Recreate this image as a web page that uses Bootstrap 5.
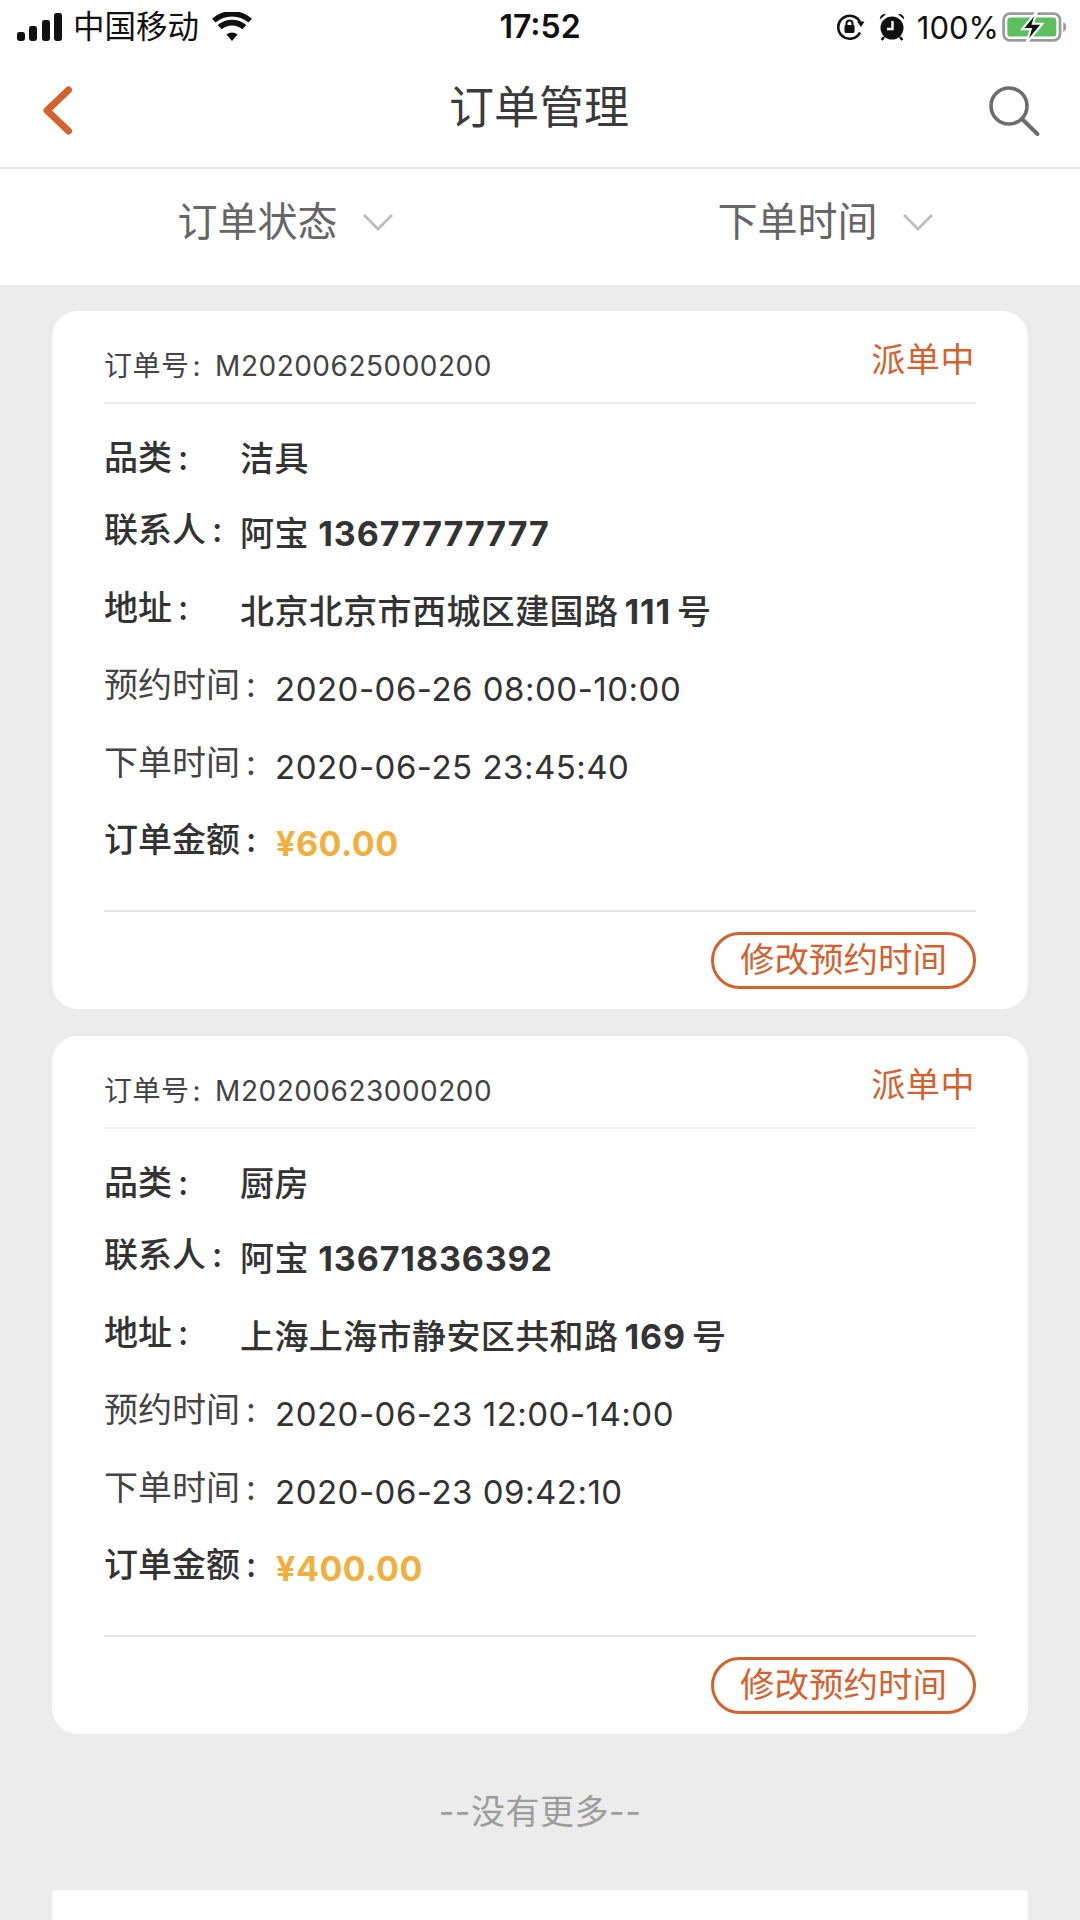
<!DOCTYPE html>
<html lang="zh-CN">
<head>
<meta charset="utf-8">
<title>订单管理</title>
<link rel="stylesheet" href="https://cdn.jsdelivr.net/npm/bootstrap@5.3.0/dist/css/bootstrap.min.css">
<style>
html,body{height:1920px;overflow:hidden}
body{background:#ececec;color:#333;font-family:Inter,"Noto Sans CJK SC",sans-serif}
.shell-top{background:#fff}
.statusbar{height:54px;padding:0 12px 0 17px;color:#111;position:relative}
.carrier{font-size:31.5px;line-height:1;margin-left:10px;margin-right:13px}
.clock{position:absolute;left:0;right:0;top:8px;text-align:center;font-size:32px;font-weight:600;line-height:38px}
.lockicon{margin-right:13px}
.pct{font-size:31px;line-height:1;margin-left:11px;margin-right:3px}
.navrow{height:115px;border-bottom:2px solid #e4e4e4;padding:0 38px 0 40px;position:relative}
.navtitle{position:absolute;left:0;right:2px;top:27px;text-align:center;font-size:45px;line-height:54px;color:#3a3a3a}
.filterrow{height:116px;padding-bottom:10px}
.filter-item{font-size:40px;color:#666;line-height:1;width:540px;gap:24px;padding-left:31px}
.sheet{width:976px;margin:0 0 0 52px;border:0;border-radius:26px;background:#fff;padding:0 52px;height:698px}
.orderhead{height:93px;border-bottom:2px solid #ebebeb;font-size:28px;color:#444;padding-top:26px}
.orderno{letter-spacing:.5px;line-height:38px;margin-top:10px}
.headcolon{margin:0 14px 0 3px}
.orderstate{color:#d4622f;font-size:34px;line-height:46px;letter-spacing:.6px;margin-right:1px}
.detail{padding-top:15px;height:508px;border-bottom:2px solid #e4e4e4;margin-bottom:20px}
.detail-row{height:77.4px;font-size:34px;line-height:46px;display:flex;padding-top:11px}
.detail-row:first-child .lab{margin-top:5px}
.detail-row:first-child .val{margin-top:6px}
.lab{font-weight:500;width:136px;flex:none;color:#333;white-space:nowrap}
.lab-wide{width:171px}
.lab-plain{font-weight:400;color:#444}
.colon{margin-left:6px}
.val{font-weight:500;color:#333;margin-top:4px;letter-spacing:.4px;white-space:nowrap}
.num{font-weight:700;font-size:34px;letter-spacing:.9px}
.num-in{margin:0 6px}
.val-plain{font-weight:400;color:#333;letter-spacing:.5px;font-size:33px}
.price{color:#f0b03f;font-weight:700;font-size:34px;letter-spacing:.5px;margin-left:1px}
.pillbtn{height:57px;width:265px;border:3px solid #d4622f;border-radius:29px;color:#d4622f;font-size:34.5px;line-height:1;padding:0;background:#fff}
.pillbtn:hover{color:#d4622f;background:#fff;border-color:#d4622f}
.endnote{font-size:34px;color:#9c9c9c;text-align:center;height:156px;line-height:156px;letter-spacing:.5px}
.gapper{margin-bottom:27px}
.topgap{height:26px}
.bottombar{width:976px;margin-left:52px;height:40px;background:#fff;border-radius:5px 5px 0 0}
</style>
</head>
<body>
<div class="shell-top">
  <div class="statusbar d-flex align-items-center">
    <svg width="46" height="28" viewBox="0 0 46 28" aria-hidden="true"><rect x="0" y="19" width="8" height="9" rx="2.4" fill="#111"/><rect x="12" y="13" width="8" height="15" rx="2.4" fill="#111"/><rect x="25" y="7" width="8" height="21" rx="2.4" fill="#111"/><rect x="37" y="0" width="8" height="28" rx="2.4" fill="#111"/></svg>
    <span class="carrier">中国移动</span>
    <svg width="40" height="30" viewBox="0 0 40 30" aria-hidden="true"><path d="M20 29 14.5 22.6a8.6 8.6 0 0 1 11 0Z" fill="#111"/><path d="M9.6 17.3 5.7 13a22 22 0 0 1 28.6 0l-3.9 4.3a16 16 0 0 0-20.8 0Z" fill="#111"/><path d="M3.5 10.6 0 6.7a30 30 0 0 1 40 0l-3.5 3.9a25 25 0 0 0-33 0Z" fill="#111"/></svg>
    <div class="clock">17:52</div>
    <div class="ms-auto d-flex align-items-center">
      <svg width="30" height="30" viewBox="0 0 30 30" class="lockicon" aria-hidden="true"><path d="M25.5 11.2A11.5 11.5 0 1 0 25 20.5" fill="none" stroke="#111" stroke-width="2.6"/><path d="M22 9.5h7.5L26 15Z" fill="#111"/><rect x="9.5" y="13" width="10" height="8" rx="1.4" fill="#111"/><path d="M11.5 13.5v-2a3 3 0 0 1 6 0v2" fill="none" stroke="#111" stroke-width="2"/></svg>
      <svg width="28" height="28" viewBox="0 0 26 28" aria-hidden="true"><circle cx="13" cy="15" r="11.5" fill="#111"/><path d="M0.8 6.5A5 5 0 0 1 7 1.2ZM25.2 6.5A5 5 0 0 0 19 1.2Z" fill="#111"/><path d="M5 24 2.6 27M21 24l2.4 3" stroke="#111" stroke-width="2.6"/><path d="M13.5 8v8H8" fill="none" stroke="#fff" stroke-width="2.4"/></svg>
      <span class="pct">100%</span>
      <svg width="66" height="32" viewBox="0 0 62 30" aria-hidden="true"><rect x="1.5" y="2.5" width="53" height="25" rx="6" fill="none" stroke="#9b9b9b" stroke-width="2.6"/><rect x="5" y="6" width="46" height="18" rx="3" fill="#5cc05f"/><path d="M57.5 10.5a5 5 0 0 1 0 9Z" fill="#9b9b9b"/><path d="M33 0 19 17h8l-4 13 15-18h-9Z" fill="#111" stroke="#fff" stroke-width="2"/></svg>
    </div>
  </div>
  <div class="navrow d-flex align-items-center justify-content-between">
    <svg width="34" height="54" viewBox="0 0 34 54" aria-hidden="true"><path d="M28.5 6 7 26.5 28.5 47" fill="none" stroke="#d4622f" stroke-width="7" stroke-linecap="round" stroke-linejoin="round"/></svg>
    <div class="navtitle">订单管理</div>
    <svg width="54" height="54" viewBox="0 0 54 54" aria-hidden="true"><circle cx="21" cy="22" r="18" fill="none" stroke="#6c6c6c" stroke-width="3.6"/><path d="M34 35 49.5 50" stroke="#6c6c6c" stroke-width="4" stroke-linecap="round"/></svg>
  </div>
  <div class="filterrow d-flex align-items-center">
    <div class="filter-item d-flex align-items-center justify-content-center">订单状态<svg width="32" height="18" viewBox="0 0 32 18" aria-hidden="true"><path d="M2 2 16 16 30 2" fill="none" stroke="#bdbdbd" stroke-width="2.8"/></svg></div>
    <div class="filter-item d-flex align-items-center justify-content-center">下单时间<svg width="32" height="18" viewBox="0 0 32 18" aria-hidden="true"><path d="M2 2 16 16 30 2" fill="none" stroke="#bdbdbd" stroke-width="2.8"/></svg></div>
  </div>
</div>

<div class="topgap"></div>

<div class="card sheet gapper">
  <div class="orderhead d-flex justify-content-between align-items-start">
    <span class="orderno">订单号<span class="headcolon">:</span>M20200625000200</span>
    <span class="orderstate">派单中</span>
  </div>
  <div class="detail">
    <div class="detail-row"><span class="lab">品类<span class="colon">:</span></span><span class="val">洁具</span></div>
    <div class="detail-row"><span class="lab">联系人<span class="colon">:</span></span><span class="val">阿宝 <span class="num">13677777777</span></span></div>
    <div class="detail-row"><span class="lab">地址<span class="colon">:</span></span><span class="val">北京北京市西城区建国路<span class="num num-in">111</span>号</span></div>
    <div class="detail-row"><span class="lab lab-wide lab-plain">预约时间<span class="colon">:</span></span><span class="val val-plain">2020-06-26 08:00-10:00</span></div>
    <div class="detail-row"><span class="lab lab-wide lab-plain">下单时间<span class="colon">:</span></span><span class="val val-plain">2020-06-25 23:45:40</span></div>
    <div class="detail-row"><span class="lab lab-wide">订单金额<span class="colon">:</span></span><span class="val price">¥60.00</span></div>
  </div>
  <div class="d-flex justify-content-end"><button type="button" class="btn pillbtn">修改预约时间</button></div>
</div>

<div class="card sheet">
  <div class="orderhead d-flex justify-content-between align-items-start">
    <span class="orderno">订单号<span class="headcolon">:</span>M20200623000200</span>
    <span class="orderstate">派单中</span>
  </div>
  <div class="detail">
    <div class="detail-row"><span class="lab">品类<span class="colon">:</span></span><span class="val">厨房</span></div>
    <div class="detail-row"><span class="lab">联系人<span class="colon">:</span></span><span class="val">阿宝 <span class="num">13671836392</span></span></div>
    <div class="detail-row"><span class="lab">地址<span class="colon">:</span></span><span class="val">上海上海市静安区共和路<span class="num num-in">169</span>号</span></div>
    <div class="detail-row"><span class="lab lab-wide lab-plain">预约时间<span class="colon">:</span></span><span class="val val-plain">2020-06-23 12:00-14:00</span></div>
    <div class="detail-row"><span class="lab lab-wide lab-plain">下单时间<span class="colon">:</span></span><span class="val val-plain">2020-06-23 09:42:10</span></div>
    <div class="detail-row"><span class="lab lab-wide">订单金额<span class="colon">:</span></span><span class="val price">¥400.00</span></div>
  </div>
  <div class="d-flex justify-content-end"><button type="button" class="btn pillbtn">修改预约时间</button></div>
</div>

<div class="endnote">--没有更多--</div>
<div class="bottombar"></div>
<script src="https://cdn.jsdelivr.net/npm/bootstrap@5.3.0/dist/js/bootstrap.bundle.min.js"></script>
</body>
</html>
